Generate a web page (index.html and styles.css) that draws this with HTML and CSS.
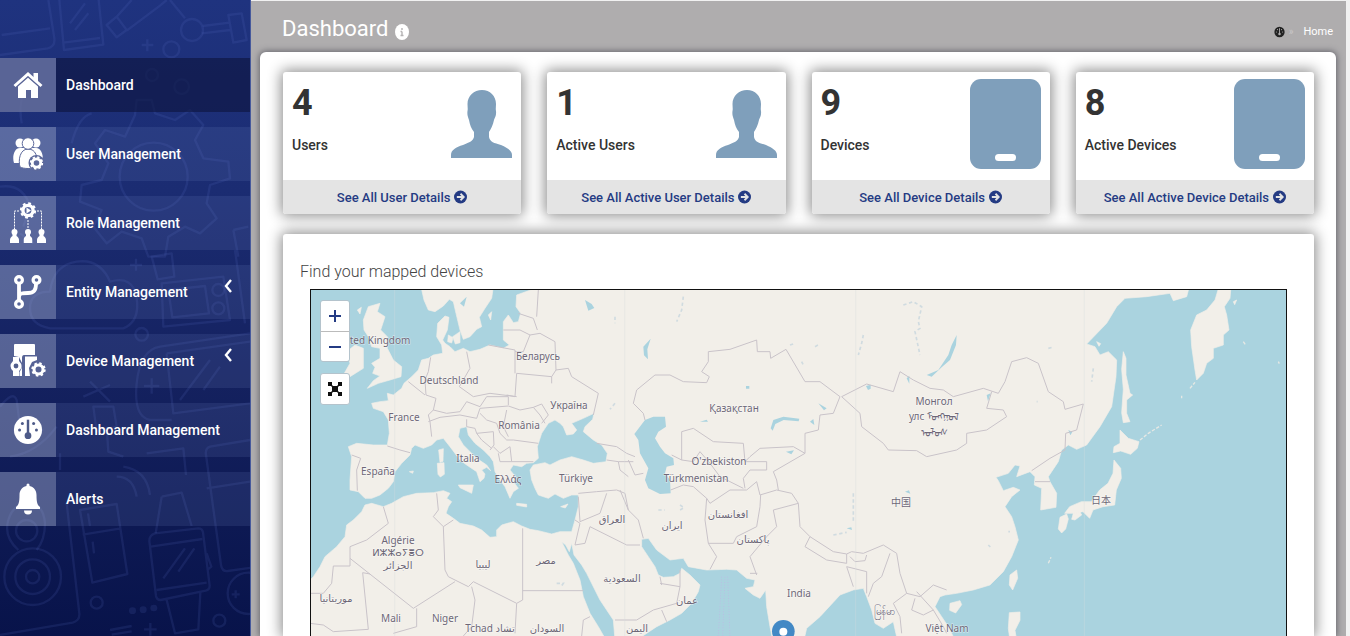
FILE: index.html
```html
<!DOCTYPE html>
<html lang="en">
<head>
<meta charset="utf-8">
<title>Dashboard</title>
<link rel="stylesheet" href="styles.css">
</head>
<body>
<svg class="defs" width="0" height="0" aria-hidden="true">
  <symbol id="i-arrow" viewBox="0 0 16 16"><circle cx="8" cy="8" r="8" fill="currentColor"/><path d="M3.500 8h8M8 4l4 4-4 4" fill="none" stroke="#e4e4e4" stroke-width="2.200"/></symbol>
  <symbol id="i-user" viewBox="0 0 61 68"><path d="M31 0c8 0 14 6 14 14 0 3-.5 5 0 7 .5 5-1 6-2 9-1 5-3 9-5 12v5c1 5 5 6 12 8 7 3 11 6 11 10v3H0v-3c0-5 5-8 12-10 7-3 10-4 11-8v-5c-3-4-4-7-5-12-1-3-2-5-1.500-9 .5-2 0-4 0-7C16.500 6 23 0 31 0z" fill="#7f9fbb"/></symbol>
  <symbol id="i-tablet" viewBox="0 0 71 90"><rect width="71" height="90" rx="11" fill="#7f9fbb"/><rect x="25" y="75" width="21" height="7" rx="3.500" fill="#fff"/></symbol>
  <symbol id="i-gauge" viewBox="0 0 32 32"><circle cx="16" cy="16" r="15" fill="currentColor"/><path d="M16 5v16" stroke="var(--hole)" stroke-width="2.600"/><circle cx="16" cy="22" r="3.600" fill="var(--hole)"/><g fill="var(--hole)"><circle cx="7" cy="16" r="1.600"/><circle cx="25" cy="16" r="1.600"/><circle cx="10" cy="9" r="1.600"/><circle cx="22" cy="9" r="1.600"/></g></symbol>
  <symbol id="i-cog" viewBox="-10 -10 20 20"><circle r="6" fill="none" stroke="currentColor" stroke-width="4"/><circle r="8.300" fill="none" stroke="currentColor" stroke-width="2.600" stroke-dasharray="3.260 3.260"/></symbol>
  <symbol id="i-person" viewBox="0 0 9 14"><circle cx="4.500" cy="3" r="3" fill="currentColor"/><path d="M0 14v-3c0-2 1-3 2.500-4V4h4v3C8 8 9 9 9 11v3z" fill="currentColor"/></symbol>
</svg>

<div class="app">
  <aside class="sidebar">
    <svg class="doodles" viewBox="0 0 750 1908" preserveAspectRatio="xMinYMin slice" aria-hidden="true">
      <g fill="none" stroke="#5c74c8" stroke-opacity=".15" stroke-width="7" stroke-linejoin="round">
        <path d="M5 105L150 85M145 0l18 115q3 25-20 30L0 165M178 0l14 150 118-16L296 0M190 128l110-14M210 70l45-60M225 90l40-50"/>
        <path d="M320 75l30-25 30 40-30 22zM350 50l45-50M380 92l100-75L500 0M510 0l45 55M608 78l80-10M606 100l84-10M685 45l40-5 15 80-40 8zM425 135h35M442 118v36"/>
        <circle cx="576" cy="90" r="33"/><circle cx="514" cy="148" r="24"/><circle cx="456" cy="225" r="18"/><circle cx="545" cy="260" r="22"/>
        <path d="M405 345l5-45h45l10 40 60 20 45-30 40 45-25 45 25 55 75 10 5 50-60 20-10 55 30 45-50 45-45-20-50 30-10 60h-50l-20-55-60-20-45 35-40-50 25-50-65-25 5-50 60-15 20-50-40-60 30-40 60 20z"/>
        <circle cx="461" cy="530" r="102"/>
        <path d="M65 370q-15-90 35-120M215 430q20-80 60-90M0 560q70-10 90 60l-20 60M60 700l40 30M700 690l45-10M700 690l15 80"/>
        <path d="M150 985q-60-10-60-60t60-50q10-80 80-90t100 60q70-20 80 50t-40 90zM455 770l60-10 8 70-50 8zM390 795h36M408 776v36M485 850l185-20 20 130-200 20zM505 870l110-12 12 82-110 12z"/>
        <circle cx="655" cy="870" r="18"/><circle cx="655" cy="925" r="18"/><circle cx="425" cy="1003" r="19"/>
        <path d="M705 750l30 220M480 1040l270-40M500 1060l250-35M480 1040q-60 10-70 110t40 110l65 0M500 1060l20 180 230-30M540 1200l90-120M610 1170l50-70M455 1135v46M432 1158h46"/>
        <path d="M250 1190l80-35M270 1145l60 60M280 1220h60l10 60-60 15zM320 1280l5 75 45 15M0 1220q40-50 50-20l10 80 70 10M30 1370q80-10 140-90M180 1360v50M440 1360l110-15 8 80"/>
        <path d="M750 1320l-120 20q-15 5-12 25l45 330q3 20 20 18l70-10M620 1465l130-20M350 1430q50 0 60 60M370 1400q70 10 80 85"/>
        <path d="M240 1530l110-18 32 210-105 26zM248 1604l110-18M264 1540l6 38M278 1625l4 35M200 1510l38 330q2 22-20 28L0 1905M485 1490l60-12 30 100M485 1490l-18 110"/>
        <path d="M465 1600l130-15q12 0 14 12l20 160q0 12-12 15l-135 28q-12 0-14-12l-20-165q0-18 17-23zM452 1640l155-23M470 1770l150-22M490 1735l65-90M535 1715l48-70M500 1800l25 100 70-12 6-110M620 1660l14 40-10 8"/>
        <path d="M55 1650q-45-40-30-90t60-50 50 60q0 50-25 80"/>
        <circle cx="80" cy="1592" r="32"/><circle cx="98" cy="1730" r="85"/><circle cx="98" cy="1730" r="52"/><circle cx="98" cy="1730" r="20"/><circle cx="290" cy="1808" r="18"/><circle cx="658" cy="1862" r="18"/><circle cx="745" cy="1780" r="62"/>
        <path d="M397 1832h1M429 1829h1M461 1824h1" stroke-width="20" stroke-linecap="round"/>
        <path d="M330 1890l65-12M335 1904l60-10M432 1888h38M451 1869v38M695 1783h24M707 1771v24"/>
      </g>
    </svg>
    <nav class="menu">
      <a class="item active" href="#dashboard"><span class="ico"><svg width="30" height="28" viewBox="0 0 30 28"><path d="M1.500 15L15 3l13.500 12" fill="none" stroke="#fff" stroke-width="3"/><path d="M20.500 2H25v9l-4.500-4z" fill="#fff"/><path d="M5 15.500L15 6.800l10 8.700V27h-7v-8h-5v8H5z" fill="#fff"/></svg></span><span class="label">Dashboard</span></a>
      <a class="item" href="#users"><span class="ico"><svg width="31" height="34" viewBox="0 0 31 34"><g fill="#fff"><circle cx="7" cy="6" r="4.500"/><circle cx="23" cy="6" r="4.500"/><path d="M1 26c-2-6 0-15 6-15h5v15zM18 11h5c5 0 7 6 7 12H18z"/></g><g fill="#fff" stroke="#5d699b" stroke-width="1"><path d="M7 30c-2-7 0-18 8-18s10 8 9 18c-5 2-13 2-17 0z"/><circle cx="15" cy="6.500" r="5.800"/></g><circle cx="23.500" cy="26" r="8" fill="#5d699b"/><use href="#i-cog" x="16.500" y="19" width="14" height="14"/></svg></span><span class="label">User Management</span></a>
      <a class="item" href="#roles"><span class="ico"><svg width="38" height="44" viewBox="0 0 38 44"><use href="#i-cog" x="10.500" y="1" width="17" height="17"/><path d="M17.500 6.500l4.500 3-4.500 3z" fill="#fff"/><path d="M10 10H5.500v18M28 10h4.500v18M19 19v9" fill="none" stroke="#fff" stroke-dasharray="2 1"/><use href="#i-person" x="1" y="28" width="9" height="14"/><use href="#i-person" x="14.500" y="28" width="9" height="14"/><use href="#i-person" x="28" y="28" width="9" height="14"/></svg></span><span class="label">Role Management</span></a>
      <a class="item" href="#entities"><span class="ico"><svg width="30" height="38" viewBox="0 0 30 38"><g fill="none" stroke="#fff"><g stroke-width="3.200"><circle cx="6" cy="7" r="3.400"/><circle cx="23.500" cy="7" r="3.400"/><circle cx="6" cy="31" r="3.400"/></g><path d="M6 10v18M6 24c0-4 4-4 9-4 6 0 8-3 8-9" stroke-width="3.800"/></g></svg></span><span class="label">Entity Management</span><svg class="chev" width="8" height="14" viewBox="0 0 8 14"><path d="M7 1L2 7l5 6" fill="none" stroke="#fff" stroke-width="2.400"/></svg></a>
      <a class="item" href="#devices"><span class="ico"><svg width="36" height="36" viewBox="0 0 36 36"><g fill="#fff"><path d="M5 1h19q1 0 1 1v10H14q-2 0-2 3v5L9 14l-5-1V2q0-1 1-1z"/><path d="M3 14h6v4q5 5 0 10v5H3v-5q-5-5 0-10z"/><path d="M12 22v11H9.500v-4q2.500-3 2.500-7zM15 13.500h12V17l-5 2-3 6 1 8h-5z"/></g><circle cx="6" cy="23" r="2.400" fill="#515e8c"/><use href="#i-cog" x="21" y="19" width="15" height="15"/></svg></span><span class="label">Device Management</span><svg class="chev" width="8" height="14" viewBox="0 0 8 14"><path d="M7 1L2 7l5 6" fill="none" stroke="#fff" stroke-width="2.400"/></svg></a>
      <a class="item" href="#boards"><span class="ico"><svg class="gauge" width="30" height="32"><use href="#i-gauge"/></svg></span><span class="label">Dashboard Management</span></a>
      <a class="item" href="#alerts"><span class="ico"><svg width="26" height="32" viewBox="0 0 26 32"><path d="M11.500 2a1.500 1.500 0 0 1 3 0v1c5 1 7 5 7 9 0 8 1 10 3.500 12v2H1v-2c2.500-2 3.500-4 3.500-12 0-4 2-8 7-9zM9 27.500h8a4 4 0 0 1-8 0z" fill="#fff"/></svg></span><span class="label">Alerts</span></a>
    </nav>
  </aside>

  <main class="main">
    <header class="top">
      <h1>Dashboard</h1>
      <svg class="info" width="14" height="16" viewBox="0 0 14 16"><ellipse cx="7" cy="8" rx="7" ry="8" fill="#fff"/><path d="M7 4v2M7 7.500v4M5.500 11.500h3M5.500 7.500H7" stroke="#b5b3b4" stroke-width="1.400"/></svg>
      <nav class="crumbs"><svg class="mini" width="11" height="12"><use href="#i-gauge"/></svg><span class="sep">»</span><a href="#home">Home</a></nav>
    </header>
    <div class="panel">
      <section class="cards">
        <article class="card"><div class="body"><div><strong>4</strong><h2>Users</h2></div><svg class="user" width="61" height="68"><use href="#i-user"/></svg></div><a href="#all-users">See All User Details <svg width="13" height="14"><use href="#i-arrow"/></svg></a></article>
        <article class="card"><div class="body"><div><strong>1</strong><h2>Active Users</h2></div><svg class="user" width="61" height="68"><use href="#i-user"/></svg></div><a href="#active-users">See All Active User Details <svg width="13" height="14"><use href="#i-arrow"/></svg></a></article>
        <article class="card"><div class="body"><div><strong>9</strong><h2>Devices</h2></div><svg class="tablet" width="71" height="90"><use href="#i-tablet"/></svg></div><a href="#all-devices">See All Device Details <svg width="13" height="14"><use href="#i-arrow"/></svg></a></article>
        <article class="card"><div class="body"><div><strong>8</strong><h2>Active Devices</h2></div><svg class="tablet" width="71" height="90"><use href="#i-tablet"/></svg></div><a href="#active-devices">See All Active Device Details <svg width="13" height="14"><use href="#i-arrow"/></svg></a></article>
      </section>
      <section class="mapbox">
        <h2>Find your mapped devices</h2>
        <div class="map">
          <svg class="world" viewBox="311 290 976 346" preserveAspectRatio="xMinYMin slice">
            <g transform="translate(300 280) scale(.33333)">
              <g class="land">
                <path d="M363 20L372 60 385 90 405 95 430 78 448 58 460 65 468 100 480 150 490 178 510 170 530 148 545 140 538 112 555 85 575 55 580 20z"/>
                <path d="M720 20L650 45 648 80 662 100 655 125 640 128 625 105 610 125 610 180 628 195 610 205 570 195 540 208 510 215 490 205 465 215 450 200 435 190 428 180 442 150 447 112 435 108 413 130 410 170 425 195 428 220 400 225 385 235 365 240 355 270 335 290 312 310 305 325 280 345 262 340 265 362 240 365 215 370 220 385 250 395 265 420 268 460 262 495 220 495 170 490 145 500 155 530 150 600 150 630 175 635 195 655 215 655 240 645 265 625 280 605 285 575 305 550 330 525 335 505 345 495 370 505 395 495 410 480 430 475 450 500 480 540 500 555 530 575 540 605 552 595 555 582 545 570 560 562 572 572 560 555 530 535 505 510 490 495 475 470 480 445 500 440 505 465 525 490 550 510 570 530 580 545 585 575 600 600 615 620 630 655 640 635 655 625 640 605 648 592 630 570 640 555 665 560 680 550 700 548 715 535 712 500 725 460 745 430 765 420 780 430 790 440 800 465 820 462 830 450 815 430 850 415 882 400 878 418 855 440 850 455 880 480 905 495 922 520 918 545 880 550 850 540 815 530 780 540 750 555 735 548 700 555 690 570 695 600 705 625 715 645 745 655 765 642 790 655 815 645 835 645 835 680 825 720 815 755 780 755 755 762 715 752 690 748 665 738 640 725 605 735 590 750 590 770 570 772 545 750 520 738 480 730 460 715 438 700 445 680 455 665 440 655 450 640 430 632 400 638 350 640 310 650 275 670 250 680 215 670 195 675 185 695 160 720 140 735 135 770 110 800 75 830 60 860 40 890 20 910V1080H918L895 1040 870 1000 850 950 840 900 820 850 805 825 785 785 797 795 808 815 815 790 822 825 845 855 860 880 885 930 900 960 920 990 940 1020 945 1080H1010L1070 1040 1110 1020 1145 1000 1175 970 1195 935 1200 915 1170 885 1145 865 1140 880 1120 890 1090 892 1075 885 1065 860 1045 830 1025 800 1025 778 1045 775 1070 810 1110 840 1150 835 1165 860 1220 870 1280 868 1310 870 1340 895 1365 900 1360 920 1335 925 1360 945 1380 955 1397 930 1400 980 1410 1040 1418 1080H1512L1520 1045 1560 1010 1620 945 1660 930 1690 925 1700 950 1715 990 1725 1030 1750 1045 1780 1025 1792 1080H1965L1945 1040 1925 1010 1905 980 1920 950 1935 945 1970 940 2020 930 2070 915 2110 875 2135 830 2155 780 2145 740 2135 710 2115 680 2135 650 2160 630 2140 622 2110 632 2095 602 2088 592 2125 580 2145 555 2160 558 2150 590 2190 575 2205 590 2203 615 2225 625 2222 690 2268 682 2270 640 2250 605 2245 590 2275 545 2285 510 2305 495 2330 508 2360 495 2400 440 2435 380 2448 290 2450 240 2425 215 2400 225 2385 200 2360 192 2420 130 2450 80 2475 55 2540 50 2610 40 2620 62 2660 50 2668 20z"/>
                <path d="M2757 20L2745 60 2720 90 2690 105 2672 150 2675 200 2685 270 2690 300 2710 280 2720 250 2740 235 2740 205 2770 195 2770 165 2787 150 2780 105 2773 80 2790 55 2793 20z"/>
                <path d="M205 80L240 70 232 95 255 110 242 150 262 170 262 205 280 240 305 260 303 290 270 300 235 310 202 325 220 302 240 288 218 280 225 262 215 250 240 235 240 205 215 200 205 170 192 150 190 120zM165 195L190 205 190 265 150 290 130 285 150 250 140 215zM172 90l12-8-4 20zM480 155l-22 15 8 22 14-4zM445 165l14 8-4 16-12-4zM565 105l10-10-3 25zM416 510l14-4-1 38-9 3zM412 550l20-2 1 35-12 8-7-8zM475 615l45 0-5 25-35-17zM650 670l30 3 0 8-30-5zM782 680l22-8-8 12zM328 575l12-2-2 7z"/>
                <path d="M2470 215l8 20 0 50 12 55 8 5-18 15 0 40 10 25-20 3-5-30 5-70-5-60zM2460 450l25 25 32 10-5 20-20 18-30-10-22 5 2-18 18-10zM2442 540l20 25 2 30-15 35-5 45-35 5-30 10-10 25-20-20-30 5-25 0 15-20 35-15 30 0 25-35 25-20 15-30zM2280 712l20-10 5 15-8 30-12 12-10-12zM2320 700l20-5 5 10-20 15-10-2zM2130 885l20-15 3 25-15 35-10-15zM1950 970l30-8 5 12-18 25-18-8zM2128 998l32-2 0 25-15 30 5 30h-20l-5-35zM2390 185l12 6-5 8zM2800 65l10-5-6 14z"/>
              </g>
              <g class="water">
                <path d="M1035 420L1060 410 1095 410 1098 440 1075 455 1065 475 1080 500 1095 520 1120 535 1122 555 1100 560 1095 580 1110 600 1112 640 1080 642 1045 625 1035 600 1045 565 1020 520 1015 480 1003 462z"/>
                <path d="M1880 285L1915 270 1945 225 1955 195 1970 165 1968 195 1950 240 1925 262 1895 290zM1412 445l8-25 30-10 48 6-2 8-45-4-25 12-8 20zM1530 425l10-8 3 18zM1458 515l24-4-8 12zM1030 200l22-24-10 32 2 30-12-12zM1200 425l20-6 4 6zM1698 318l14-4 0 12-8 4zM1820 295l8-8 0 24zM855 60l20 12 8 12-18 8zM480 70l20-20-8 30zM1555 370l25 15-8 6zM1815 635l12-4 4 10z"/>
                <path d="M2060 345l12-5-8 24zM2305 450l12 6-6 10zM1640 745l14-3 2 8zM1338 318h10v8h-10z"/>
              </g>
              <g class="borders">
                <path d="M500 215L510 265 478 320 520 350 570 340 650 350M392 232L385 275 375 300 378 345 408 355 400 390 385 405 390 425 395 470M325 305L375 345M262 498L300 510 330 518M155 525L182 535 170 570 172 632M400 390L440 400 480 395 500 365 540 380 560 350 625 350 625 375M385 425L420 412 480 405 530 415 540 385 625 378 660 390 700 382 720 405 735 430M500 418L500 440 525 445 530 460 580 455 582 495 570 510M530 460L545 480 575 505M540 400L560 420 590 430 600 460 620 480 640 480 715 490M620 390L610 440 625 470M580 500L600 520 630 500 635 545 600 545 595 520M635 545L700 545M610 150L660 150 690 165 720 160 765 185 768 270 755 290 650 280 645 350 620 345M645 210L645 280M645 210L565 195M690 165L670 215 645 215M655 100L700 115 712 150M715 30L710 110M700 382L725 372 745 405 725 430M755 290L755 310M768 270L805 265 815 290 895 340 880 405M890 490L950 500 980 520 1005 530M920 540L955 545 960 570 985 590M955 545L1000 545M985 540L1005 585 1030 580M835 640L890 635 950 630 975 640 985 690 1015 720 1030 775M835 650L840 725 900 700 920 640M825 720L840 730 825 795 855 790 870 740 980 795 1020 795"/>
                <path d="M410 640L415 690 400 710 430 740 435 870 445 890 505 920 520 905 650 970 668 960 668 745M668 932L850 932M650 970L645 1060M250 680L265 730 200 780 150 800 150 858 100 858 95 910 70 940 30 940M150 835L340 985 465 905M350 985L350 1040 280 1060M188 878L205 1048 100 1055 70 1035 30 1030M188 878L210 882M515 920L525 960 515 1040 490 1068M430 740L460 720M845 1068L850 1020 870 1010M945 1020L1010 1020 1060 990 1130 970 1140 920 1080 910M1140 870L1140 920M1080 890L1085 915M1085 990L1100 1025"/>
                <path d="M1035 420L1030 400 1000 370 1010 330 1065 285 1110 285 1150 305 1220 308 1228 290 1205 275 1225 245 1225 215 1290 208 1370 180 1372 215 1410 215 1412 235 1458 208 1515 305 1560 305 1620 350 1600 400 1560 405 1555 450 1515 460 1515 520 1480 500 1380 505 1350 530 1335 545 1330 490 1240 485 1180 445 1145 455 1145 540 1115 525M1145 540L1180 545 1200 515 1230 550 1260 590 1330 625M1112 630L1150 615 1180 620 1220 655 1230 670 1290 630 1340 630 1370 605 1380 645 1430 630 1475 640 1495 670 1420 690 1430 740 1400 770 1350 830 1370 885M1335 545L1400 545 1400 570 1350 570 1330 595 1335 625M1515 520L1420 575 1430 600 1435 630M1220 655L1215 720 1225 790 1300 790 1310 770 1370 740 1380 680 1382 645M1225 790L1250 830 1230 868M960 630L985 690M1350 880H1372"/>
                <path d="M1625 350L1700 312 1780 335 1800 275 1840 300 1890 325 1930 330 1960 350 2050 325 2095 340 2115 305 2135 245 2180 233 2215 250 2245 335 2290 365 2295 388 2350 372 2330 450 2297 460 2295 510 2250 535 2195 572M1625 350L1680 400 1685 440 1750 490 1765 510 1850 512 1880 530 1970 510 2000 490 2000 460 2060 450 2120 410 2110 390 2060 385 2075 335M2250 605H2205M1495 670L1500 740 1530 770 1600 815 1640 822 1640 850 1580 840 1515 800 1530 770M1640 822L1655 815 1690 820 1750 795 1790 820 1800 880 1820 940 1860 950 1900 915 1940 930M1650 830L1665 845 1695 842 1700 825M1640 860L1660 920M1640 860L1700 875 1700 940M1770 820L1745 890 1720 910 1705 950M1820 940L1780 970 1800 1010 1805 1060M1845 955L1835 990 1870 1005 1900 990 1930 1040 1940 1060M1850 935L1900 990"/>
              </g>
              <path class="tiles" d="M284 30V1068M974 30V1068M1667 30V1068M2353 30V1068"/>
              <path class="hatch" d="M1265 890L1255 1068M1275 890L1268 1068M1283 890L1290 1068"/>
              <path class="specks" d="M1150 50l-5 40-15 35M1810 75l30-10 25 15-10 45 5 20-15 10 15 70M1690 165l-5 25-10 35M945 370l-15 18M945 110v20M1470 195l15-5M1545 200l15-8M1505 245l4 8M1075 690h20M1140 675l12 8-14 8M1660 640v90M1600 765l40-8M2210 365h3M2245 205l12-3M2065 795l6 6M2125 755h5M2380 265l-5 40M770 910l20 0-8 12"/>
              <path class="isles" d="M2670 325l15-18M2645 355v-8M2520 480l25-20 40-25M2830 185l8 12M2935 245l3 6M2245 850l8-18"/>
              <g class="pin"><circle cx="1450" cy="1054" r="34" fill="#4389c5"/><circle cx="1450" cy="1055" r="12" fill="#fff"/></g>
            </g>
            <g class="names">
              <text x="372" y="344">United Kingdom</text><text x="449" y="384">Deutschland</text><text x="404" y="421">France</text><text x="378" y="475">España</text><text x="468" y="462">Italia</text><text x="508" y="483">Ελλάς</text><text x="519" y="429">România</text><text x="569" y="409">Україна</text><text x="538" y="360">Беларусь</text><text x="576" y="482">Türkiye</text>
              <text x="398" y="544">Algérie</text><text x="398" y="556">ⵍⵣⵣⴰⵢⴻⵔ</text><text x="398" y="569">الجزائر</text><text x="483" y="568">ليبيا</text><text x="546" y="564">مصر</text><text x="612" y="523">العراق</text><text x="622" y="582">السعودية</text><text x="336" y="602">موريتانيا</text><text x="391" y="622">Mali</text><text x="445" y="622">Niger</text><text x="490" y="632">Tchad تشاد</text><text x="547" y="632">السودان</text>
              <text x="734" y="412">Қазақстан</text><text x="719" y="465">O'zbekiston</text><text x="696" y="482">Türkmenistan</text><text x="672" y="529">ایران</text><text x="728" y="518">افغانستان</text><text x="753" y="543">پاکستان</text><text x="687" y="604">عمان</text><text x="637" y="632">اليمن</text><text x="799" y="597">India</text><text x="884" y="615">မြန်မာ</text><text x="947" y="632">Việt Nam</text>
              <text x="934" y="405">Монгол</text><text x="934" y="420">улс ᠮᠣᠩᠭᠣᠯ</text><text x="934" y="436">ᠤᠯᠤᠰ</text><text x="901" y="506">中国</text><text x="1101" y="504">日本</text>
            </g>
          </svg>
          <div class="controls">
            <div class="zoom"><button type="button" aria-label="Zoom in"><svg width="12" height="12"><path d="M6 0v12M0 6h12" stroke="#243b83" stroke-width="2"/></svg></button><button type="button" aria-label="Zoom out"><svg width="12" height="12"><path d="M0 6h12" stroke="#243b83" stroke-width="2"/></svg></button></div>
            <button class="full" type="button" aria-label="Full screen"><svg width="14" height="14" viewBox="0 0 14 14"><path d="M0 0h4v3l1 1h4l1-1V0h4v4h-3l-1 1v4l1 1h3v4h-4v-3l-1-1H5l-1 1v3H0v-4h3l1-1V5L3 4H0z" fill="#111"/></svg></button>
          </div>
        </div>
      </section>
    </div>
  </main>
</div>
</body>
</html>
```
FILE: styles.css
```css
* { box-sizing: border-box; }
body { margin: 0; font-family: Roboto, "Liberation Sans", sans-serif; color: #333; }
h1, h2 { margin: 0; font-weight: 400; }
a { text-decoration: none; }
.defs { position: absolute; }

.app { display: flex; height: 100vh; overflow: hidden; background: #f1f1f1; }

.sidebar {
  position: relative;
  flex: none;
  width: 251px;
  padding-top: 58px;
  background: linear-gradient(#1f337f, #1b2c72 30%, #14215f 60%, #08134a);
  border-right: 1px solid #46599c;
}
.doodles { position: absolute; inset: 0; width: 100%; height: 100%; }
.menu { position: relative; display: flex; flex-direction: column; gap: 15px; }
.item { display: flex; align-items: center; height: 54px; background: rgba(120, 140, 200, .15); color: #fff; font-size: 14px; font-weight: 500; }
.item.active { background: rgba(14, 22, 65, .65); }
.ico { display: flex; align-items: center; justify-content: center; width: 56px; height: 54px; margin-right: 10px; background: rgba(190, 200, 225, .33); }
.active .ico { background: rgba(160, 170, 215, .5); }
.gauge { --hole: #4d5a88; }
.chev { margin: 0 18px 12px auto; }

.main { flex: 1; display: flex; flex-direction: column; margin: 1px 4px 0 0; padding: 0 10px 0 9px; background: #afadae; }
.top { display: flex; align-items: center; height: 51px; padding: 4px 3px 0 22px; color: #fff; }
.top h1 { font-size: 22px; line-height: 28px; }
.info { margin: 6px 0 0 7px; }
.crumbs { display: flex; align-items: center; gap: 4px; margin: 6px 0 0 auto; font-size: 11px; }
.crumbs a { margin-left: 6px; color: #fff; }
.mini { --hole: #afadae; color: #222; }
.sep { color: #c9c7c8; font-size: 10px; }

.panel { flex: 1; display: flex; flex-direction: column; gap: 20px; padding: 20px 22px 0 23px; background: #fff; border-radius: 6px 6px 0 0; box-shadow: 0 0 6px 1px #66666e; }
.cards { display: grid; grid-template-columns: repeat(4, 1fr); gap: 26px; }
.card { border-radius: 3px; background: #fff; box-shadow: 0 0 14px 2px rgba(0, 0, 0, .45); }
.body { display: flex; justify-content: space-between; height: 108px; padding: 7px 9px; }
.body strong { display: block; margin-top: 4px; font-size: 36px; line-height: 40px; }
.body h2 { margin-top: 12px; font-size: 14px; line-height: 20px; font-weight: 500; }
.user { margin-top: 11px; }
.card > a { display: flex; align-items: center; justify-content: center; gap: 4px; height: 34px; border-radius: 0 0 3px 3px; background: #e4e4e4; color: #243b83; font-size: 13px; font-weight: 500; }

.mapbox { flex: 1; display: flex; flex-direction: column; padding: 26px 27px 0 17px; border-radius: 3px 3px 0 0; background: #fff; box-shadow: 0 0 14px 2px rgba(0, 0, 0, .45); }
.mapbox h2 { font-size: 16px; line-height: 24px; font-weight: 300; color: #444; }
.map { position: relative; flex: 1; margin: 5px 0 0 10px; border: 1px solid #111; border-bottom: 0; background: #aad3df; overflow: hidden; }
.world { position: absolute; inset: 0; width: 100%; height: 100%; }
.land { fill: #f2efe9; stroke: #f2efe9; stroke-width: 2; stroke-linejoin: round; }
.water { fill: #aad3df; }
.borders { fill: none; stroke: #c9c3c9; stroke-width: 3; stroke-linejoin: round; }
.tiles { stroke: #d8dcdf; stroke-width: 2; opacity: .5; }
.hatch { stroke: #b9bfe3; stroke-width: 3; stroke-dasharray: 3 5; }
.specks { fill: none; stroke: #d0dbe0; stroke-width: 5; stroke-dasharray: 10 8; }
.isles { fill: none; stroke: #e6e8e4; stroke-width: 4; stroke-dasharray: 10 5; }
.names { font-family: "Noto Sans", "DejaVu Sans", "Noto Sans CJK SC", sans-serif; font-size: 10px; text-anchor: middle; fill: #6d6777; stroke: rgba(255, 255, 255, .6); stroke-width: 1px; paint-order: stroke; }

.controls { position: absolute; top: 10px; left: 9px; display: flex; flex-direction: column; gap: 11px; }
.controls button { display: flex; align-items: center; justify-content: center; width: 28px; height: 30px; padding: 0; border: 0; background: #fff; }
.zoom { border: 1px solid #b4c3cc; border-radius: 3px; overflow: hidden; }
.zoom button + button { border-top: 1px solid #bbb; }
.controls .full { width: 30px; height: 32px; border: 1px solid #b4c3cc; border-radius: 3px; }
```
